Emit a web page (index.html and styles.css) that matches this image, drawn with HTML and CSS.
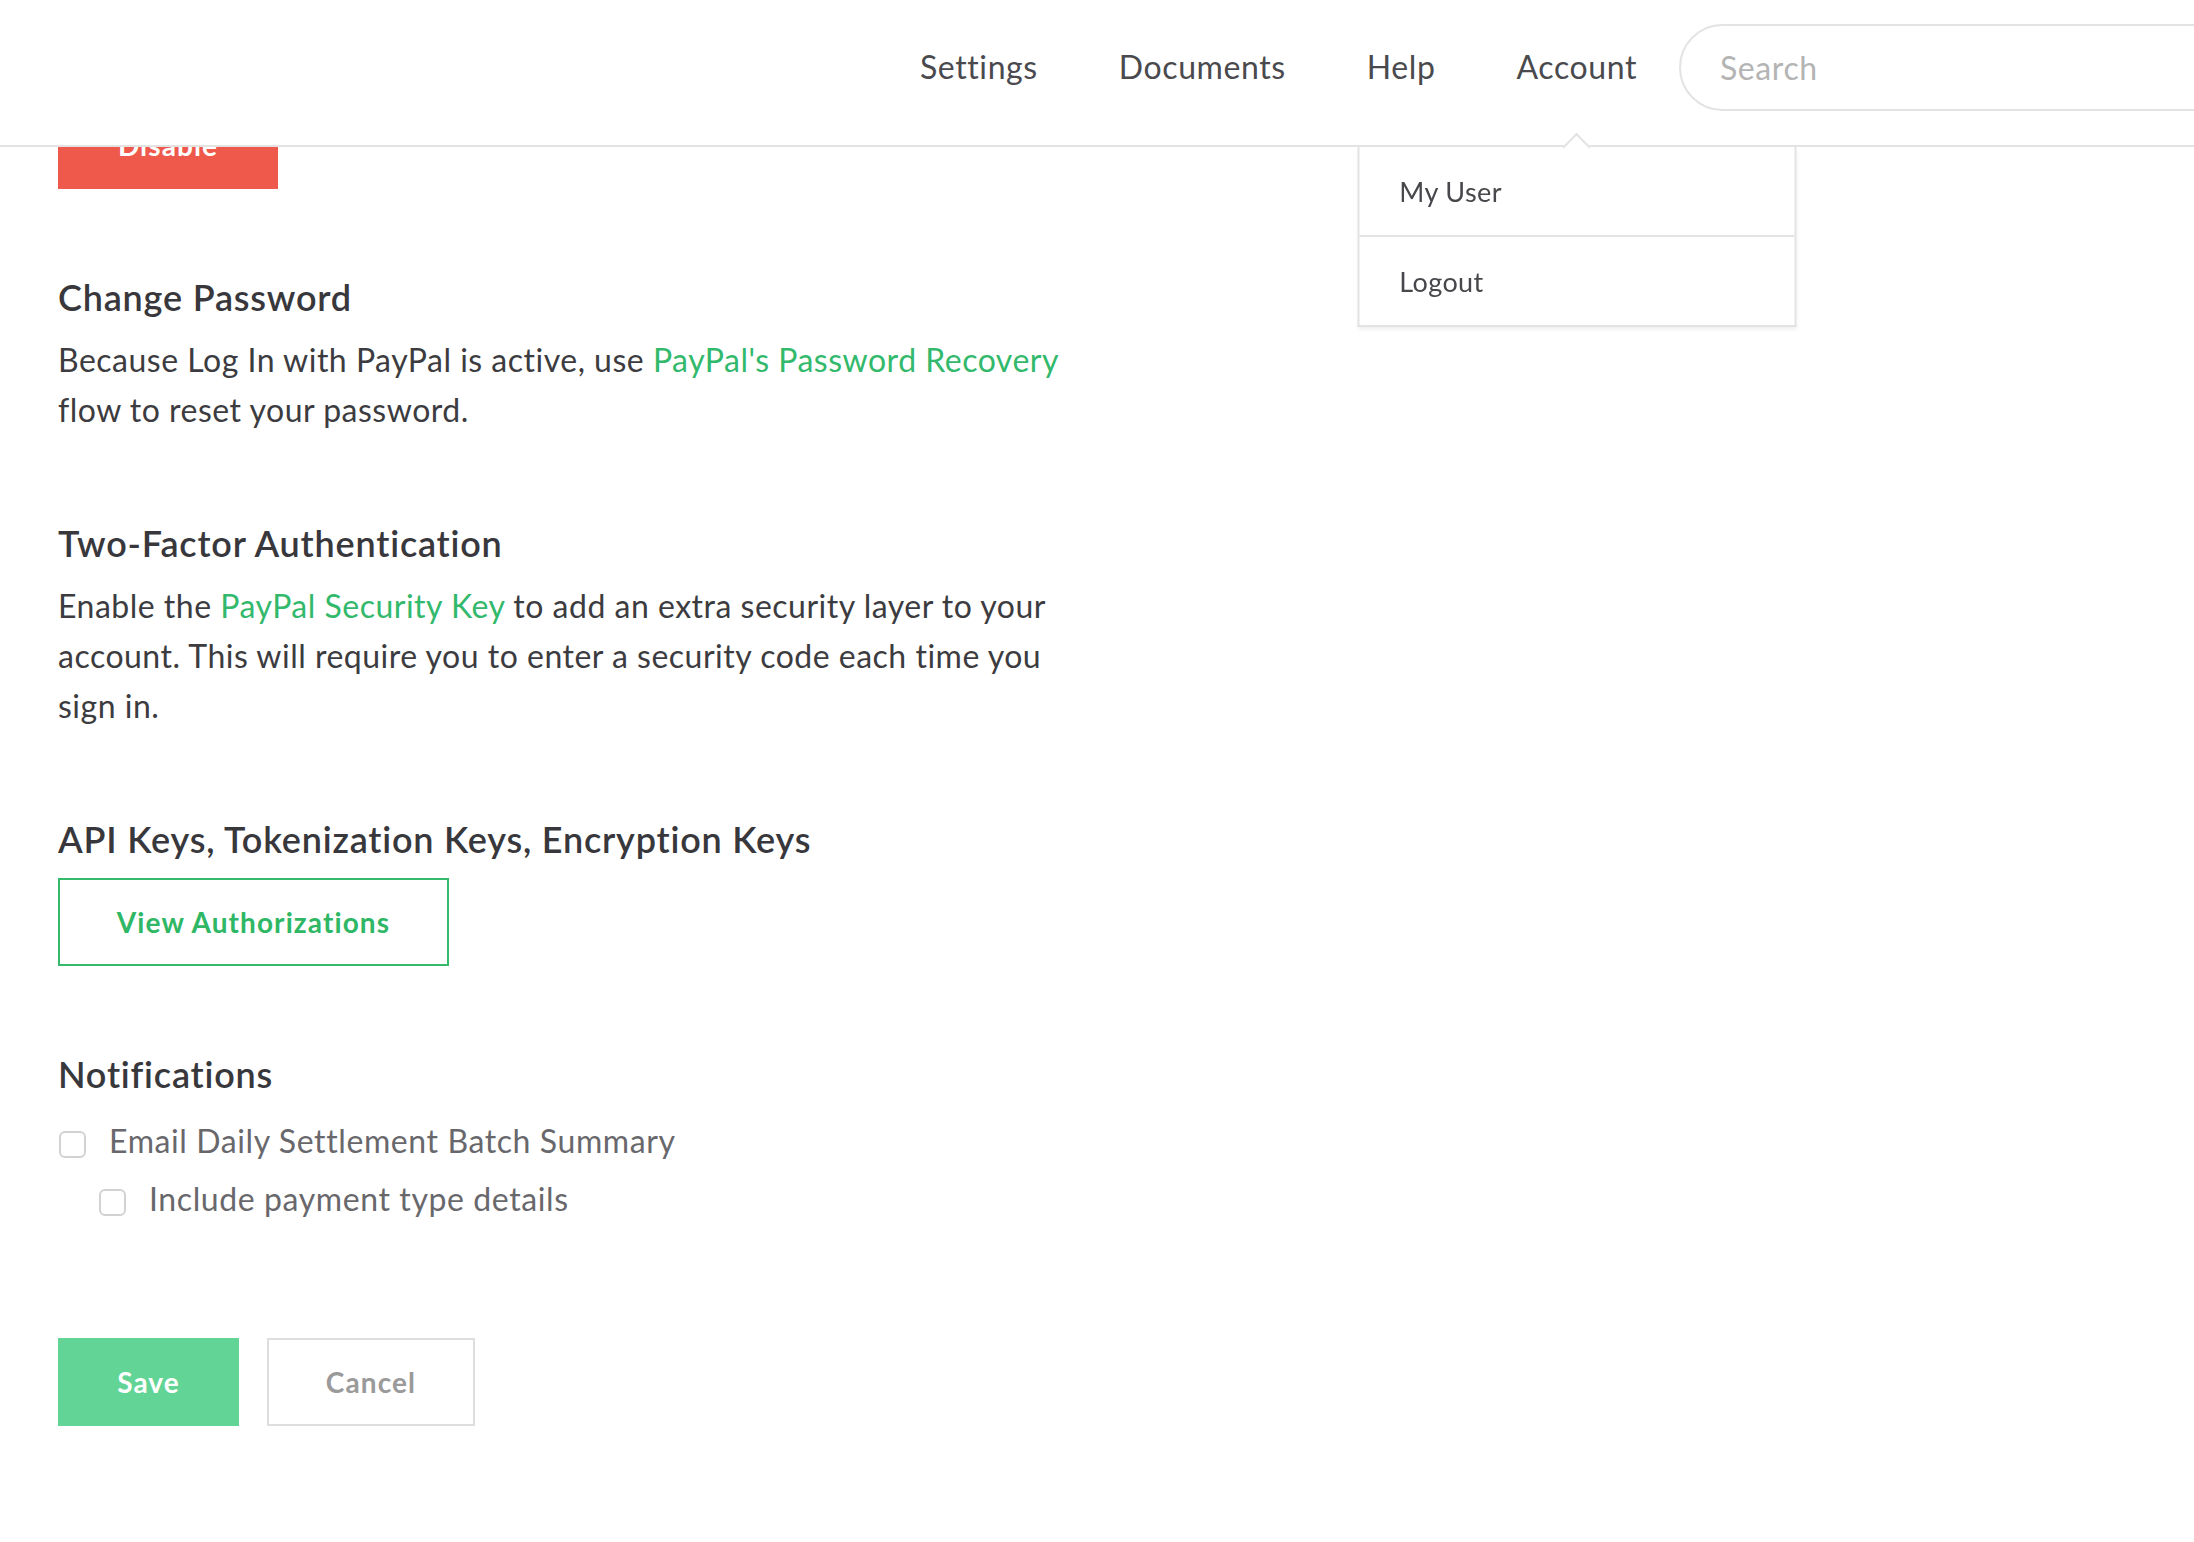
FILE: index.html
```html
<!DOCTYPE html>
<html lang="en">
<head>
<meta charset="utf-8">
<title>Account Settings</title>
<link rel="stylesheet" href="styles.css">
</head>
<body>
<header class="topbar">
  <nav class="nav">
    <div class="nav-item"><a class="nav-link" href="#">Settings</a></div>
    <div class="nav-item"><a class="nav-link" href="#">Documents</a></div>
    <div class="nav-item"><a class="nav-link" href="#">Help</a></div>
    <div class="nav-item nav-item--open">
      <a class="nav-link" href="#">Account</a>
      <ul class="dropdown">
        <li class="dropdown-item"><a href="#">My User</a></li>
        <li class="dropdown-item"><a href="#">Logout</a></li>
      </ul>
    </div>
  </nav>
  <div class="search"><input class="search-input" type="text" placeholder="Search"></div>
</header>

<main class="content">
  <button class="btn btn-danger" type="button">Disable</button>

  <section class="section">
    <h2 class="section-title">Change Password</h2>
    <p class="section-text"><span>Because Log In with PayPal is active, use <a class="link" href="#">PayPal's Password Recovery</a></span> <span>flow to reset your password.</span></p>
  </section>

  <section class="section">
    <h2 class="section-title">Two-Factor Authentication</h2>
    <p class="section-text"><span>Enable the <a class="link" href="#">PayPal Security Key</a> to add an extra security layer to your</span> <span>account. This will require you to enter a security code each time you</span> <span>sign in.</span></p>
  </section>

  <section class="section">
    <h2 class="section-title">API Keys, Tokenization Keys, Encryption Keys</h2>
    <button class="btn btn-outline" type="button">View Authorizations</button>
  </section>

  <section class="section">
    <h2 class="section-title">Notifications</h2>
    <div class="checks">
      <label class="check"><input class="check-box" type="checkbox"><span class="check-label">Email Daily Settlement Batch Summary</span></label>
      <label class="check check--nested"><input class="check-box" type="checkbox"><span class="check-label">Include payment type details</span></label>
    </div>
  </section>

  <div class="actions">
    <button class="btn btn-primary" type="button">Save</button>
    <button class="btn btn-default" type="button">Cancel</button>
  </div>
</main>
</body>
</html>
```

FILE: styles.css
```css
html, body {
  margin: 0;
  padding: 0;
  background: #ffffff;
  overflow-x: hidden;
}

body {
  font-family: "Lato", "Liberation Sans", sans-serif;
  color: #3c3c40;
}

/* ---------- Top bar ---------- */
.topbar {
  position: fixed;
  top: 0;
  left: 0;
  right: 0;
  z-index: 10;
  height: 147px;
  box-sizing: border-box;
  background: #ffffff;
  border-bottom: 2px solid #e3e3e3;
  display: flex;
  align-items: stretch;
}

.nav {
  margin-left: auto;
  display: flex;
  align-items: stretch;
  gap: 81px;
}

.nav-item {
  position: relative;
  display: flex;
  align-items: center;
  padding-bottom: 12px;
}

.nav-link {
  font-size: 32px;
  line-height: 40px;
  color: #4a4a4e;
  text-decoration: none;
  letter-spacing: 0.6px;
}

.dropdown {
  list-style: none;
  margin: 0;
  padding: 0;
  position: absolute;
  top: calc(100% + 2px);
  left: 50%;
  transform: translateX(-50%);
  width: 439px;
  box-sizing: border-box;
  background: #ffffff;
  border: 2px solid #e3e3e3;
  border-top: 0;
  box-shadow: 0 3px 4px rgba(0, 0, 0, 0.06);
}

.dropdown::before {
  content: "";
  position: absolute;
  top: -10px;
  left: 50%;
  width: 20px;
  height: 20px;
  margin-left: -10px;
  box-sizing: border-box;
  background: #ffffff;
  border-top: 2px solid #e3e3e3;
  border-left: 2px solid #e3e3e3;
  transform: rotate(45deg);
}

.dropdown-item + .dropdown-item {
  border-top: 2px solid #e3e3e3;
}

.dropdown-item a {
  position: relative;
  display: block;
  height: 88px;
  line-height: 90px;
  padding: 0 39px 0 40px;
  font-size: 27px;
  color: #48484c;
  text-decoration: none;
  letter-spacing: 0.4px;
}

.search {
  align-self: flex-start;
  margin: 24px -60px 0 42px;
}

.search-input {
  display: block;
  width: 575px;
  height: 87px;
  box-sizing: border-box;
  border: 2px solid #e3e3e3;
  border-radius: 44px;
  padding: 0 39px;
  font-family: "Lato", "Liberation Sans", sans-serif;
  font-size: 32px;
  letter-spacing: 0.6px;
  color: #444;
  outline: none;
  background: #fff;
}

.search-input::placeholder {
  color: #b4b4b4;
}

/* ---------- Content ---------- */
.content {
  padding: 101px 0 116px 58px;
}

.section {
  margin-top: 86px;
  width: 1010px;
}

.section-title {
  margin: 0;
  font-size: 36px;
  line-height: 44px;
  font-weight: 600;
  color: #38383c;
  letter-spacing: 0.8px;
}

.section-text {
  margin: 16px 0 0;
  font-size: 32px;
  line-height: 50px;
  color: #3c3c40;
  letter-spacing: 0.5px;
}

.link {
  color: #32b96c;
  text-decoration: none;
}

/* ---------- Buttons ---------- */
.btn {
  display: inline-block;
  height: 88px;
  box-sizing: border-box;
  padding: 0;
  border: 2px solid transparent;
  border-radius: 0;
  font-family: "Lato", "Liberation Sans", sans-serif;
  font-size: 28px;
  font-weight: 700;
  letter-spacing: 1.1px;
  background: #fff;
  cursor: pointer;
}

.btn-danger {
  width: 220px;
  background: #ef594b;
  border-color: #ef594b;
  color: #ffffff;
}

.btn-outline {
  margin-top: 17px;
  width: 391px;
  color: #2fb765;
  border-color: #33ba6b;
}

.btn-primary {
  width: 181px;
  background: #61d496;
  border-color: #61d496;
  color: #ffffff;
}

.btn-default {
  width: 208px;
  color: #9a9a9a;
  border-color: #dedede;
}

/* ---------- Checkboxes ---------- */
.checks {
  margin-top: 20px;
  display: flex;
  flex-direction: column;
  gap: 8px;
}

.check {
  display: flex;
  align-items: center;
  font-size: 32px;
  line-height: 50px;
  color: #68686c;
  letter-spacing: 0.6px;
}

.check--nested {
  padding-left: 40px;
}

.check-box {
  appearance: none;
  -webkit-appearance: none;
  flex: none;
  width: 27px;
  height: 27px;
  margin: 6px 23px 0 1px;
  box-sizing: border-box;
  border: 2px solid #d2d2d2;
  border-radius: 6px;
  background: #fff;
}

/* ---------- Actions ---------- */
.actions {
  margin-top: 114px;
  display: flex;
  gap: 28px;
}
```
